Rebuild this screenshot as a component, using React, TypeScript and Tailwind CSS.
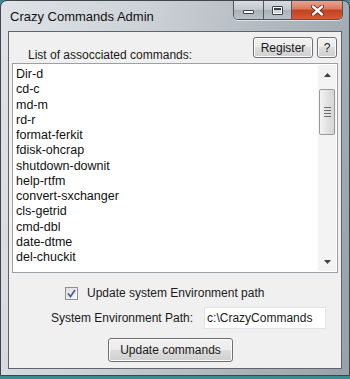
import React from "react";

const commands = [
  "Dir-d",
  "cd-c",
  "md-m",
  "rd-r",
  "format-ferkit",
  "fdisk-ohcrap",
  "shutdown-downit",
  "help-rtfm",
  "convert-sxchanger",
  "cls-getrid",
  "cmd-dbl",
  "date-dtme",
  "del-chuckit",
];

const font = { fontFamily: '"Liberation Sans", Arial, sans-serif' };

function VistaButton({ children, className = "" }: { children: React.ReactNode; className?: string }) {
  return (
    <div
      className={`flex items-center justify-center rounded-[3px] border border-[#707070] bg-[linear-gradient(to_bottom,#f2f2f2_0%,#ebebeb_50%,#dddddd_50%,#cfcfcf_100%)] text-[#1a1a1a] shadow-[inset_0_0_0_1px_#fcfcfc] ${className}`}
    >
      {children}
    </div>
  );
}

function TitleButtons() {
  return (
    <div className="flex h-[19px] overflow-hidden rounded-b-[5px] border border-t-0 border-[#4e5660] shadow-[0_1px_0_rgba(255,255,255,0.6)]">
      <div className="flex w-[30px] items-center justify-center border-r border-[#4e5660] bg-[linear-gradient(to_bottom,#d9dde2_0%,#c1c7ce_50%,#a9b1ba_51%,#b9c1c9_100%)]">
        <div className="mt-[3px] h-[4px] w-[11px] rounded-[1px] border border-[#3c4148] bg-white" />
      </div>
      <div className="flex w-[28px] items-center justify-center border-r border-[#4e5660] bg-[linear-gradient(to_bottom,#d9dde2_0%,#c1c7ce_50%,#a9b1ba_51%,#b9c1c9_100%)]">
        <div className="h-[9px] w-[11px] rounded-[1px] border border-[#3c4148] bg-white p-[1px]">
          <div className="h-full w-full border-t-[2px] border-[#3c4148] bg-[#d0d5da]" />
        </div>
      </div>
      <div className="flex w-[50px] items-center justify-center bg-[linear-gradient(to_bottom,#e8a493_0%,#d9785f_45%,#c2411e_50%,#d5593a_100%)]">
        <svg width="13" height="11" viewBox="0 0 13 11">
          <path d="M2 1.5 L11 9.5 M11 1.5 L2 9.5" stroke="#5a2010" strokeWidth="4" strokeLinecap="round" />
          <path d="M2 1.5 L11 9.5 M11 1.5 L2 9.5" stroke="#ffffff" strokeWidth="2.4" strokeLinecap="round" />
        </svg>
      </div>
    </div>
  );
}

function ScrollBar() {
  return (
    <div className="flex w-[18px] flex-col items-center bg-[#f3f3f3] py-[1px]">
      <div className="flex h-[17px] w-full items-center justify-center">
        <svg width="7" height="4" viewBox="0 0 7 4">
          <path d="M0 4 L3.5 0 L7 4 Z" fill="#404040" />
        </svg>
      </div>
      <div className="mt-[6px] flex h-[46px] w-[16px] flex-col items-center justify-center gap-[2px] rounded-[2px] border border-[#9a9a9a] bg-[linear-gradient(to_right,#f4f4f4,#e2e2e2_50%,#d6d6d6)]">
        <div className="h-[1px] w-[7px] bg-[#707070]" />
        <div className="h-[1px] w-[7px] bg-[#707070]" />
        <div className="h-[1px] w-[7px] bg-[#707070]" />
        <div className="h-[1px] w-[7px] bg-[#707070]" />
      </div>
      <div className="flex-1" />
      <div className="flex h-[17px] w-full items-center justify-center">
        <svg width="7" height="4" viewBox="0 0 7 4">
          <path d="M0 0 L3.5 4 L7 0 Z" fill="#404040" />
        </svg>
      </div>
    </div>
  );
}

export default function App() {
  return (
    <div
      className="h-[379px] w-[350px] overflow-hidden bg-[#3d8a8e] text-[12px]"
      style={font}
    >
      <div className="flex h-[376px] w-[350px] flex-col rounded-t-[7px] border border-[#3f454c] bg-[linear-gradient(100deg,#dfe3e7_0%,#cdd2d7_35%,#aeb5bc_70%,#98a1aa_100%)] px-[7px] pb-[6px]">
        {/* title bar */}
        <div className="flex h-[30px] items-start justify-between">
          <div className="pl-[2px] pt-[8px] text-[13px] leading-[16px] text-[#111]">Crazy Commands Admin</div>
          <div className="mr-[-1px]">
            <TitleButtons />
          </div>
        </div>

        {/* client area */}
        <div className="flex flex-1 flex-col border border-[#5d646c] bg-[#f0f0f0] px-[3px]">
          <div className="mt-[5px] flex h-[25px] justify-between">
            <div className="pl-[16px] pt-[12px] leading-[13px] text-[#1a1a1a]">List of assocciated commands:</div>
            <div className="flex h-[21px] gap-[4px] pr-[1px]">
              <VistaButton className="w-[60px]">Register</VistaButton>
              <VistaButton className="w-[20px]">?</VistaButton>
            </div>
          </div>

          <div className="mt-[1px] flex h-[210px] border border-[#9aa0a8] bg-white">
            <div className="flex-1 pl-[3px] pt-[3px] text-[12.5px] leading-[15.25px] text-[#111]">
              {commands.map((c) => (
                <div key={c}>{c}</div>
              ))}
            </div>
            <div className="flex py-[1px] pr-[1px]">
              <ScrollBar />
            </div>
          </div>

          <div className="mt-[13px] flex items-center pl-[53px]">
            <div className="flex h-[13px] w-[13px] items-center justify-center border border-[#8e8f8f] bg-[linear-gradient(135deg,#dcdcdc,#fbfbfb)] p-[1px]">
              <svg width="9" height="9" viewBox="0 0 9 9">
                <path d="M1 4.5 L3.5 7.5 L8 1" stroke="#4a5f97" strokeWidth="1.7" fill="none" />
              </svg>
            </div>
            <span className="ml-[9px] leading-[14px] text-[#1a1a1a]">Update system Environment path</span>
          </div>

          <div className="mt-[7px] flex items-center pl-[39px]">
            <span className="leading-[14px] text-[#1a1a1a]">System Environment Path:</span>
            <div className="ml-[11px] flex h-[22px] w-[122px] items-center border border-[#e2e3ea] bg-white pl-[2px] text-[#1a1a1a]">
              c:\CrazyCommands
            </div>
          </div>

          <div className="mt-[9px] flex pl-[96px]">
            <VistaButton className="h-[24px] w-[125px] border-[#3c7fb1] shadow-[inset_0_0_0_1px_#48d4f8]">Update commands</VistaButton>
          </div>
        </div>
      </div>
    </div>
  );
}
